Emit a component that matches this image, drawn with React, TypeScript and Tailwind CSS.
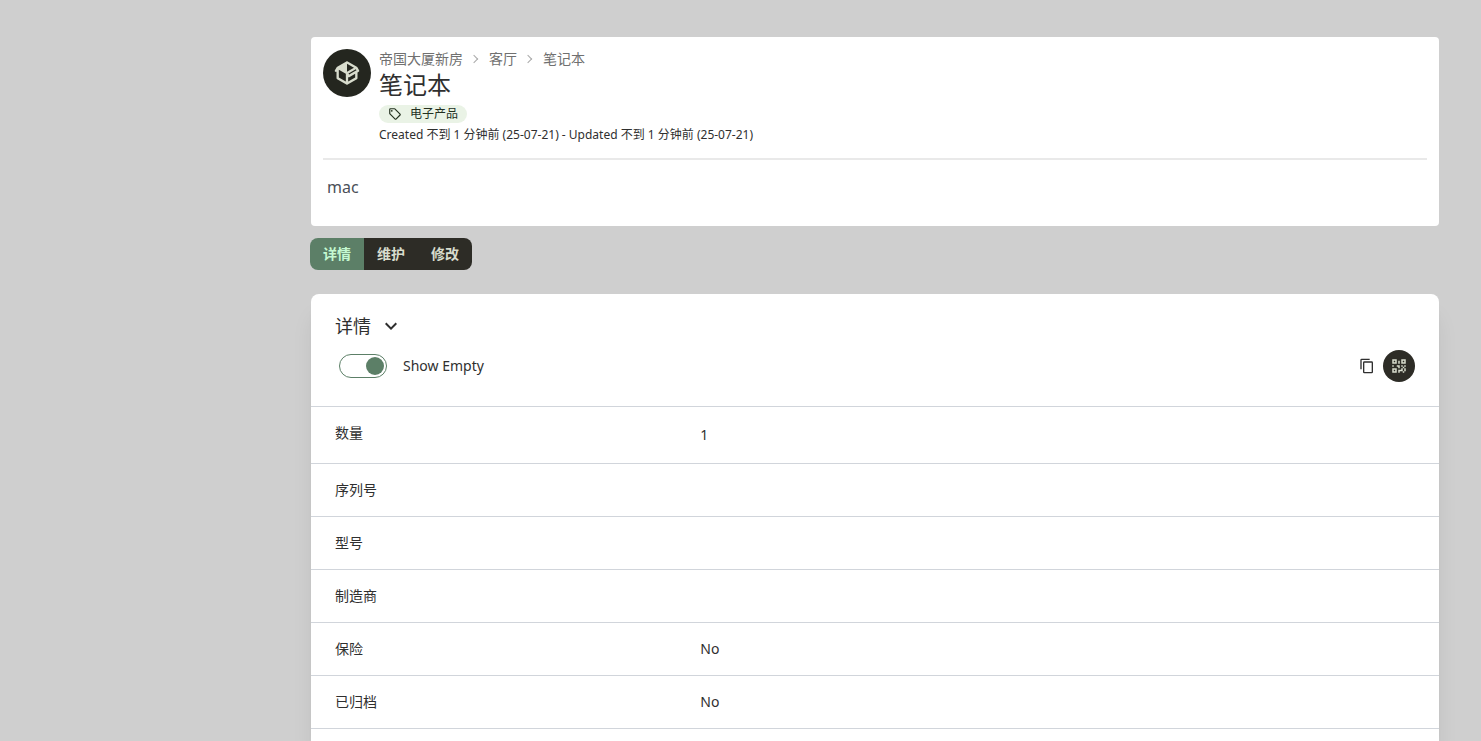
import { useState } from 'react'
import clsx from 'clsx'

const icons = {
  box: 'M2,10.96C1.5,10.68 1.35,10.07 1.63,9.59L3.13,7C3.24,6.8 3.41,6.66 3.6,6.58L11.43,2.18C11.59,2.06 11.79,2 12,2C12.21,2 12.41,2.06 12.57,2.18L20.47,6.62C20.66,6.72 20.82,6.88 20.91,7.08L22.36,9.6C22.64,10.08 22.47,10.69 22,10.96L21,11.54V16.5C21,16.88 20.79,17.21 20.47,17.38L12.57,21.82C12.41,21.94 12.21,22 12,22C11.79,22 11.59,21.94 11.43,21.82L3.53,17.38C3.21,17.21 3,16.88 3,16.5V10.96C2.7,11.13 2.32,11.14 2,10.96M12,4.15V4.15L12,10.85V10.85L17.96,7.5L12,4.15M5,15.91L11,19.29V12.58L5,9.21V15.91M19,15.91V12.69L14,15.59C13.67,15.77 13.3,15.76 13,15.6V19.29L19,15.91M13.85,13.36L20.13,9.73L19.55,8.72L13.27,12.35L13.85,13.36Z',
  tag: 'M21.41,11.58L12.41,2.58A2,2 0 0,0 11,2H4A2,2 0 0,0 2,4V11A2,2 0 0,0 2.59,12.42L11.59,21.42A2,2 0 0,0 13,22A2,2 0 0,0 14.41,21.41L21.41,14.41A2,2 0 0,0 22,13A2,2 0 0,0 21.41,11.58M13,20L4,11V4H11L20,13M6.5,5A1.5,1.5 0 1,1 5,6.5A1.5,1.5 0 0,1 6.5,5Z',
  down: 'M7.41,8.58L12,13.17L16.59,8.58L18,10L12,16L6,10L7.41,8.58Z',
  copy: 'M19,21H8V7H19M19,5H8A2,2 0 0,0 6,7V21A2,2 0 0,0 8,23H19A2,2 0 0,0 21,21V7A2,2 0 0,0 19,5M16,1H4A2,2 0 0,0 2,3V17H4V3H16V1Z',
  qr: 'M3,11H5V13H3V11M11,5H13V9H11V5M9,11H13V15H11V13H9V11M15,11H17V13H19V11H21V13H19V15H21V19H19V21H17V19H13V21H11V17H15V15H17V13H15V11M19,19V15H17V19H19M15,3H21V9H15V3M17,5V7H19V5H17M3,3H9V9H3V3M5,5V7H7V5H5M3,15H9V21H3V15M5,17V19H7V17H5Z',
}

function Icon({ name, className }: { name: keyof typeof icons; className: string }) {
  return (
    <svg viewBox="0 0 24 24" fill="currentColor" aria-hidden="true" className={className}>
      <path d={icons[name]} />
    </svg>
  )
}

const crumbs = ['帝国大厦新房', '客厅', '笔记本']
const tabs = ['详情', '维护', '修改']

const details = [
  { label: '数量', value: '1', editable: true },
  { label: '序列号', value: '' },
  { label: '型号', value: '' },
  { label: '制造商', value: '' },
  { label: '保险', value: 'No' },
  { label: '已归档', value: 'No' },
]

export default function App() {
  const [tab, setTab] = useState('详情')
  const [open, setOpen] = useState(true)
  const [showEmpty, setShowEmpty] = useState(true)

  const rows = details.filter((d) => showEmpty || d.value)

  return (
    <div className="min-h-dvh flex bg-[#cfcfcf] pl-[269px] overflow-hidden font-['Noto_Sans','Noto_Sans_CJK_SC',sans-serif] text-[#2f2f2f]">
      <main className="w-full max-w-6xl mx-auto px-3 pt-[37px] flex flex-col">
        <section className="bg-white rounded p-3">
          <header className="flex gap-2">
            <div className="size-12 shrink-0 rounded-full bg-[#24261f] text-[#d8dccd] flex items-center justify-center">
              <Icon name="box" className="size-7" />
            </div>
            <div className="flex flex-col items-start">
              <nav>
                <ul className="flex items-center text-sm text-[#707070]">
                  {crumbs.map((c, i) => (
                    <li key={c} className="flex items-center">
                      {i > 0 && (
                        <span className="size-1.5 ml-2 mr-3 rotate-45 border-t border-r border-[#a9a9a9]" />
                      )}
                      <a href="#" className="hover:underline">{c}</a>
                    </li>
                  ))}
                </ul>
              </nav>
              <h1 className="text-2xl">笔记本</h1>
              <a
                href="#"
                className="mt-1 h-[18px] flex items-center gap-2 rounded-full bg-[#eaf3e6] px-[9px] text-xs text-[#23301f]"
              >
                <Icon name="tag" className="size-[14px]" />
                电子产品
              </a>
              <p className="mt-1 text-xs">
                Created 不到 1 分钟前 (25-07-21) - Updated 不到 1 分钟前 (25-07-21)
              </p>
            </div>
          </header>
          <hr className="mt-[15px] border-t-2 border-[#e9e9e9]" />
          <p className="px-1 py-[15px] text-base leading-6 text-[#4b5058]">mac</p>
        </section>

        <div role="tablist" className="mt-3 -ml-px flex self-start rounded-lg overflow-hidden">
          {tabs.map((t) => (
            <button
              key={t}
              role="tab"
              aria-selected={t === tab}
              onClick={() => setTab(t)}
              className={clsx(
                'h-8 px-[13px] text-sm font-bold',
                t === tab ? 'bg-[#5c7f67] text-[#c5f9d1]' : 'bg-[#2d2c26] text-[#d8dccd]',
              )}
            >
              {t}
            </button>
          ))}
        </div>

        <section className="mt-6 grow bg-white rounded-t-lg shadow-xl">
          <div className="px-6 pt-[18px] pb-6">
            <button
              aria-expanded={open}
              onClick={() => setOpen(!open)}
              className="flex items-center gap-2 text-lg leading-7"
            >
              详情
              <Icon name="down" className="size-6" />
            </button>
            <div className="mt-[10px] flex items-center justify-between">
              <label className="flex items-center gap-4 pl-1 text-sm">
                <input
                  type="checkbox"
                  checked={showEmpty}
                  onChange={(e) => setShowEmpty(e.target.checked)}
                  className="appearance-none w-12 h-6 px-[2px] flex items-center rounded-full border border-[#5c7f67] before:size-[18px] before:rounded-full before:bg-[#5c7f67] checked:justify-end"
                />
                Show Empty
              </label>
              <div className="flex items-center gap-2">
                <button aria-label="Copy">
                  <Icon name="copy" className="size-4" />
                </button>
                <button
                  aria-label="QR"
                  className="size-8 rounded-full bg-[#2d2c26] text-[#d8dccd] flex items-center justify-center"
                >
                  <Icon name="qr" className="size-[18px]" />
                </button>
              </div>
            </div>
          </div>

          {open && (
            <dl className="border-y border-[#d1d5db] divide-y divide-[#d1d5db]">
              {rows.map((d) => (
                <div key={d.label} className="grid grid-cols-3 gap-4 px-6 py-4">
                  <dt className="text-sm">{d.label}</dt>
                  <dd className={clsx('col-span-2 text-sm', d.editable && 'leading-6')}>
                    {d.value}
                  </dd>
                </div>
              ))}
            </dl>
          )}
        </section>
      </main>
    </div>
  )
}
